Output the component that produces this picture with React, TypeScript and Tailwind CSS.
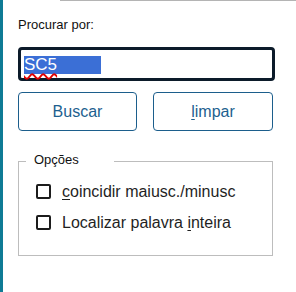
import { useState } from 'react';

function Check({ children }: { children: React.ReactNode }) {
  return (
    <label className="flex h-[31px] items-center">
      <span className="h-[15px] w-[15px] rounded-[2px] border-2 border-[#1c1c1c] bg-white" />
      <span className="ml-[11px] text-[16px] leading-[18px] text-[#1f1f1f]">{children}</span>
    </label>
  );
}

export default function App() {
  const [value] = useState('SC5');

  return (
    <div className="flex h-[292px] w-[296px] overflow-hidden bg-white font-['Liberation_Sans',Arial,sans-serif]">
      <div className="w-[3px] bg-[#0f7b95]" />
      <div className="flex-1">
        <div className="ml-[57px] h-px bg-[#b4b4b4]" />
        <div className="pl-[15px]">
          <div className="mt-[16px] text-[13px] leading-[15px] text-[#111]">Procurar por:</div>

          {/* campo de busca */}
          <div className="mt-[15px] flex h-[34px] w-[257px] items-center rounded-[4px] border-[3px] border-[#0c1b2a] pl-[3px]">
            <span className="mt-[2px] w-[77px] bg-[#3b6fd6] text-[17px] leading-[18px] text-white">
              <span className="underline decoration-[#e00000] decoration-wavy decoration-2 underline-offset-[3px]">
                {value}
              </span>
            </span>
          </div>

          <div className="mt-[11px] flex gap-[16px]">
            <button className="h-[39px] w-[119px] rounded-[4px] border border-[#1c5e8c] text-[16px] text-[#1d5f8f]">
              Buscar
            </button>
            <button className="h-[39px] w-[120px] rounded-[4px] border border-[#1c5e8c] text-[16px] text-[#1d5f8f]">
              <span className="underline underline-offset-2">l</span>impar
            </button>
          </div>

          {/* opções */}
          <div className="relative mt-[30px] h-[95px] w-[255px] border border-[#bdbdbd] pl-[17px] pt-[14px]">
            <span className="absolute -top-[10px] left-[7px] w-[88px] bg-white pl-[8px] text-[13px] leading-[15px] text-[#111]">
              Opções
            </span>
            <Check>
              <span className="underline underline-offset-2">c</span>oincidir maiusc./minusc
            </Check>
            <Check>
              Localizar palavra <span className="underline underline-offset-2">i</span>nteira
            </Check>
          </div>
        </div>
      </div>
    </div>
  );
}
